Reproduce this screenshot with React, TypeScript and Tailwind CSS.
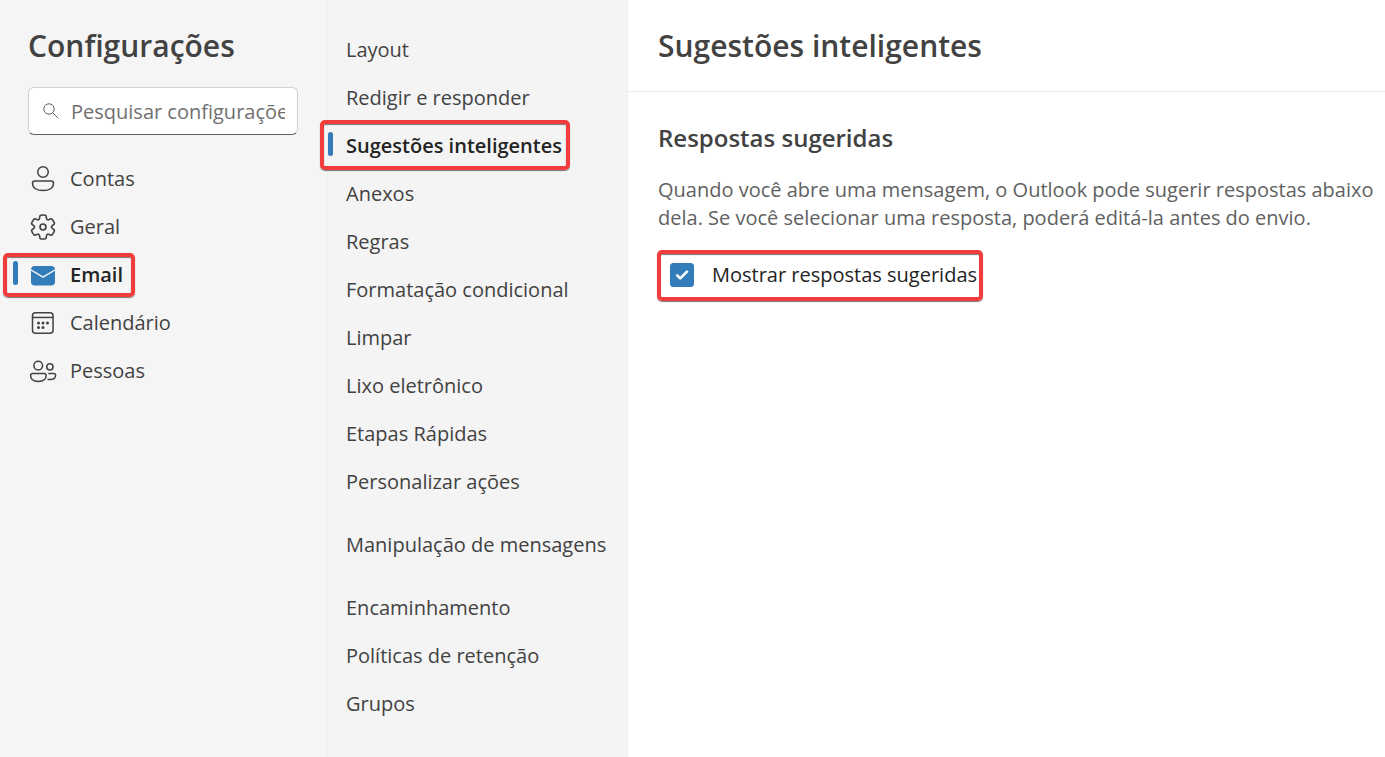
import { useState, type ReactNode } from "react";
import clsx from "clsx";

const strokeProps = {
  viewBox: "0 0 20 20",
  fill: "none",
  stroke: "currentColor",
  "aria-hidden": true,
  className: "size-[30px] shrink-0",
};

function PersonIcon() {
  return (
    <svg {...strokeProps}>
      <circle cx="10" cy="5.3" r="3.5" />
      <path d="M4.5 11.3h11a1.5 1.5 0 0 1 1.5 1.5c0 3.2-3 4.9-7 4.9s-7-1.700-7-4.900a1.500 1.500 0 0 1 1.500-1.500Z" />
    </svg>
  );
}

function GearIcon() {
  return (
    <svg {...strokeProps}>
      <g transform="translate(10 10) scale(.94) translate(-10 -10)" strokeWidth="1.15">
        <path d="M1.91 7.38A8.5 8.5 0 0 1 3.7 4.3a.5.5 0 0 1 .54-.13l1.92.68a1 1 0 0 0 1.32-.76l.36-2a.5.5 0 0 1 .4-.4 8.53 8.53 0 0 1 3.55 0c.2.04.35.2.38.4l.37 2a1 1 0 0 0 1.32.76l1.92-.68a.5.5 0 0 1 .54.13 8.5 8.5 0 0 1 1.78 3.08c.06.2 0 .4-.15.54l-1.56 1.32a1 1 0 0 0 0 1.52l1.56 1.32a.5.5 0 0 1 .15.54 8.5 8.5 0 0 1-1.78 3.08.5.5 0 0 1-.54.13l-1.92-.68a1 1 0 0 0-1.32.76l-.37 2a.5.5 0 0 1-.38.4 8.53 8.53 0 0 1-3.56 0 .5.5 0 0 1-.39-.4l-.36-2a1 1 0 0 0-1.32-.76l-1.92.68a.5.5 0 0 1-.54-.13 8.5 8.5 0 0 1-1.78-3.08.5.5 0 0 1 .15-.54l1.56-1.32a1 1 0 0 0 0-1.52L2.06 7.92a.5.5 0 0 1-.15-.54Z" />
        <circle cx="10" cy="10" r="2.1" />
      </g>
    </svg>
  );
}

function MailIcon() {
  return (
    <svg viewBox="0 0 20 20" fill="currentColor" aria-hidden className="size-[30px] shrink-0 text-[#327cba]">
      <path d="M18 7.2v7.3a2.5 2.5 0 0 1-2.5 2.5h-11A2.5 2.5 0 0 1 2 14.5V7.2l7.75 4.6a.5.5 0 0 0 .5 0L18 7.2Z" />
      <path d="M4.5 4h11a2.5 2.5 0 0 1 2.48 2.2L10 10.9 2.02 6.2A2.5 2.5 0 0 1 4.5 4Z" />
    </svg>
  );
}

function CalendarIcon() {
  return (
    <svg {...strokeProps}>
      <rect x="3" y="3.1" width="13.7" height="13.7" rx="2" />
      <path d="M3 6.3h13.7" />
      <g fill="currentColor" stroke="none">
        <circle cx="7" cy="10" r="1" />
        <circle cx="10" cy="10" r="1" />
        <circle cx="13" cy="10" r="1" />
        <circle cx="7" cy="13" r="1" />
        <circle cx="10" cy="13" r="1" />
      </g>
    </svg>
  );
}

function PeopleIcon() {
  return (
    <svg {...strokeProps}>
      <circle cx="6.8" cy="6.4" r="2.9" />
      <circle cx="14.6" cy="7.2" r="2.1" />
      <path d="M3 11.6h7.8a1.3 1.3 0 0 1 1.3 1.3c0 2.7-2.200 4.100-5.200 4.100s-5.200-1.400-5.200-4.100A1.300 1.300 0 0 1 3 11.600Z" />
      <path d="M13.500 11.600h3.700a1.200 1.200 0 0 1 1.200 1.200c0 2-1.700 2.900-3.700 2.900-.6 0-1.200-.1-1.700-.3" />
    </svg>
  );
}

const categories: { label: string; icon: ReactNode }[] = [
  { label: "Contas", icon: <PersonIcon /> },
  { label: "Geral", icon: <GearIcon /> },
  { label: "Email", icon: <MailIcon /> },
  { label: "Calendário", icon: <CalendarIcon /> },
  { label: "Pessoas", icon: <PeopleIcon /> },
];

const sections = [
  { label: "Layout" },
  { label: "Redigir e responder" },
  { label: "Sugestões inteligentes" },
  { label: "Anexos" },
  { label: "Regras" },
  { label: "Formatação condicional" },
  { label: "Limpar" },
  { label: "Lixo eletrônico" },
  { label: "Etapas Rápidas" },
  { label: "Personalizar ações" },
  { label: "Manipulação de mensagens", tall: true },
  { label: "Encaminhamento" },
  { label: "Políticas de retenção" },
  { label: "Grupos" },
];

// Red frame drawn over the item it calls out
function Highlight({ className }: { className: string }) {
  return (
    <span
      className={clsx(
        "pointer-events-none absolute rounded-[5px] border-4 border-[#f23c3c] shadow-[0_1px_1px_#777,inset_0_1px_1px_#777]",
        className
      )}
    />
  );
}

export default function App() {
  const [show, setShow] = useState(true);

  return (
    <div className="flex min-h-screen bg-white font-['Open_Sans','Noto_Sans',sans-serif] text-[20px] text-[#424242]">
      {/* Categories */}
      <aside className="w-[328px] shrink-0 border-r border-[#efefef] bg-[#f5f5f5]">
        <h1 className="px-7 pt-6 text-[30px] leading-[44px] font-semibold">Configurações</h1>

        <div className="mt-[19px] mr-[29px] ml-7 flex h-12 items-center gap-3 rounded-md border border-[#d1d1d1] border-b-[#616161] bg-white pr-3 pl-[14px]">
          <svg viewBox="0 0 16 16" fill="none" stroke="#616161" aria-hidden className="size-4 shrink-0">
            <circle cx="6" cy="6" r="5.2" />
            <path d="m9.8 9.8 5.5 5.5" />
          </svg>
          <input
            type="text"
            aria-label="Pesquisar configurações"
            placeholder="Pesquisar configurações"
            className="min-w-0 flex-1 pt-[2px] outline-none placeholder:text-[#707070]"
          />
        </div>

        <nav className="mt-5">
          {categories.map(({ label, icon }) => {
            const active = label === "Email";
            return (
              <button
                key={label}
                type="button"
                className={clsx(
                  "relative flex h-12 w-full items-center gap-3 pl-7 text-left",
                  active && "font-semibold text-[#242424]"
                )}
              >
                {active && <span className="absolute top-[10px] left-[13px] h-6 w-[5px] rounded-full bg-[#327cba]" />}
                {icon}
                {label}
                {active && <Highlight className="top-[2px] left-[3px] h-11 w-[132px]" />}
              </button>
            );
          })}
        </nav>
      </aside>

      {/* Sections of the selected category */}
      <nav className="w-[299px] shrink-0 bg-[#f4f4f4] pt-[26px]">
        {sections.map(({ label, tall }) => {
          const active = label === "Sugestões inteligentes";
          return (
            <button
              key={label}
              type="button"
              className={clsx(
                "relative flex w-full items-center pl-[18px] text-left whitespace-nowrap",
                tall ? "h-[78px]" : "h-12",
                active && "font-semibold text-[#242424]"
              )}
            >
              {active && <span className="absolute top-[10px] left-0 h-6 w-[5px] rounded-full bg-[#327cba]" />}
              {label}
              {active && <Highlight className="-top-[2px] -left-2 h-[50px] w-[250px]" />}
            </button>
          );
        })}
      </nav>

      {/* Content */}
      <main className="min-w-0 flex-1 border-l border-[#f0f0f0]">
        <header className="border-b border-[#ebebeb] px-[30px] pt-6 pb-[23px]">
          <h2 className="text-[30px] leading-[44px] font-semibold">Sugestões inteligentes</h2>
        </header>

        <section className="pt-7 pl-[30px]">
          <h3 className="text-[24px] leading-9 font-semibold">Respostas sugeridas</h3>
          <p className="mt-5 leading-7 text-[#616161]">
            Quando você abre uma mensagem, o Outlook pode sugerir respostas abaixo dela. Se você selecionar uma
            resposta, poderá editá-la antes do envio.
          </p>

          <label className="relative mt-[19px] flex h-12 w-fit items-center gap-[18px] pl-3 text-[#242424]">
            <input
              type="checkbox"
              checked={show}
              onChange={(e) => setShow(e.target.checked)}
              className="peer size-6 appearance-none rounded-[3px] border border-[#616161] checked:border-[#327cba] checked:bg-[#327cba]"
            />
            <svg
              viewBox="0 0 24 24"
              fill="none"
              stroke="white"
              strokeWidth="2.6"
              strokeLinecap="round"
              strokeLinejoin="round"
              aria-hidden
              className="pointer-events-none absolute left-3 hidden size-6 peer-checked:block"
            >
              <path d="m7.2 12.400 3 3 6.800-6.800" />
            </svg>
            Mostrar respostas sugeridas
            <Highlight className="-top-[1px] -left-[1px] h-[51px] w-[326px]" />
          </label>
        </section>
      </main>
    </div>
  );
}
